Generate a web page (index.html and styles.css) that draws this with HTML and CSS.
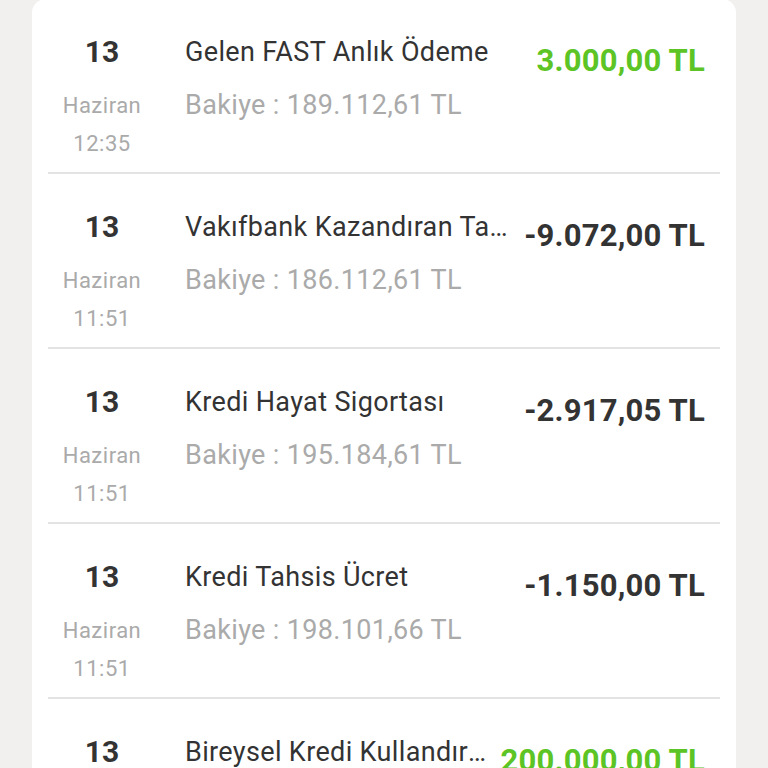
FILE: index.html
```html
<!DOCTYPE html>
<html lang="tr">
<head>
    <meta charset="UTF-8">
    <meta name="viewport" content="width=device-width, initial-scale=1.0">
    <title>Hesap Hareketleri</title>
    <link rel="stylesheet" href="styles.css">
</head>
<body>
    <div class="card">
        <ul class="tx-list">
            <li class="tx">
                <div class="tx-date">
                    <span class="day">13</span>
                    <span class="month">Haziran</span>
                    <span class="time">12:35</span>
                </div>
                <div class="tx-info">
                    <div class="tx-title">Gelen FAST Anlık Ödeme</div>
                    <div class="tx-balance">Bakiye : 189.112,61 TL</div>
                </div>
                <div class="tx-amount income">3.000,00 TL</div>
            </li>
            <li class="tx">
                <div class="tx-date">
                    <span class="day">13</span>
                    <span class="month">Haziran</span>
                    <span class="time">11:51</span>
                </div>
                <div class="tx-info">
                    <div class="tx-title">Vakıfbank Kazandıran Taksit</div>
                    <div class="tx-balance">Bakiye : 186.112,61 TL</div>
                </div>
                <div class="tx-amount">-9.072,00 TL</div>
            </li>
            <li class="tx">
                <div class="tx-date">
                    <span class="day">13</span>
                    <span class="month">Haziran</span>
                    <span class="time">11:51</span>
                </div>
                <div class="tx-info">
                    <div class="tx-title">Kredi Hayat Sigortası</div>
                    <div class="tx-balance">Bakiye : 195.184,61 TL</div>
                </div>
                <div class="tx-amount">-2.917,05 TL</div>
            </li>
            <li class="tx">
                <div class="tx-date">
                    <span class="day">13</span>
                    <span class="month">Haziran</span>
                    <span class="time">11:51</span>
                </div>
                <div class="tx-info">
                    <div class="tx-title">Kredi Tahsis Ücret</div>
                    <div class="tx-balance">Bakiye : 198.101,66 TL</div>
                </div>
                <div class="tx-amount">-1.150,00 TL</div>
            </li>
            <li class="tx">
                <div class="tx-date">
                    <span class="day">13</span>
                    <span class="month">Haziran</span>
                    <span class="time">11:51</span>
                </div>
                <div class="tx-info">
                    <div class="tx-title">Bireysel Kredi Kullandırım</div>
                    <div class="tx-balance">Bakiye : 199.251,66 TL</div>
                </div>
                <div class="tx-amount income">200.000,00 TL</div>
            </li>
        </ul>
    </div>
</body>
</html>
```

FILE: styles.css
```css
body {
    margin: 0;
    background-color: #f1f0ee;
    font-family: Roboto, "Liberation Sans", sans-serif;
    height: 768px;
    overflow: hidden;
}

.card {
    background-color: #fff;
    margin: -1px 32px 0;
    padding: 0 16px;
    border-radius: 14px 14px 0 0;
}

.tx-list {
    list-style: none;
    margin: 0;
    padding: 0;
}

.tx {
    display: flex;
    align-items: flex-start;
    padding: 35px 15px 9px 0;
    border-bottom: 2px solid #e3e3e3;
}

.tx-date {
    width: 108px;
    flex-shrink: 0;
    display: flex;
    flex-direction: column;
    align-items: center;
}

.day {
    font-size: 30px;
    line-height: 36px;
    font-weight: 700;
    color: #333;
}

.month,
.time {
    font-size: 22px;
    line-height: 38px;
    letter-spacing: 0.5px;
    color: #aaa;
}

.month {
    margin-top: 17px;
}

.tx-info {
    flex: 1;
    min-width: 0;
    margin-left: 29px;
    margin-right: 8px;
}

.tx-title {
    font-size: 27px;
    line-height: 36px;
    letter-spacing: 0.35px;
    color: #333;
    white-space: nowrap;
    overflow: hidden;
    text-overflow: ellipsis;
}

.tx-balance {
    margin-top: 17px;
    font-size: 27px;
    line-height: 36px;
    letter-spacing: 0.35px;
    color: #aaa;
    white-space: nowrap;
}

.tx-amount {
    flex-shrink: 0;
    margin-top: 9px;
    font-size: 31px;
    line-height: 36px;
    letter-spacing: 0.2px;
    font-weight: 700;
    color: #333;
}

.tx-amount.income {
    color: #5cc425;
}
```
